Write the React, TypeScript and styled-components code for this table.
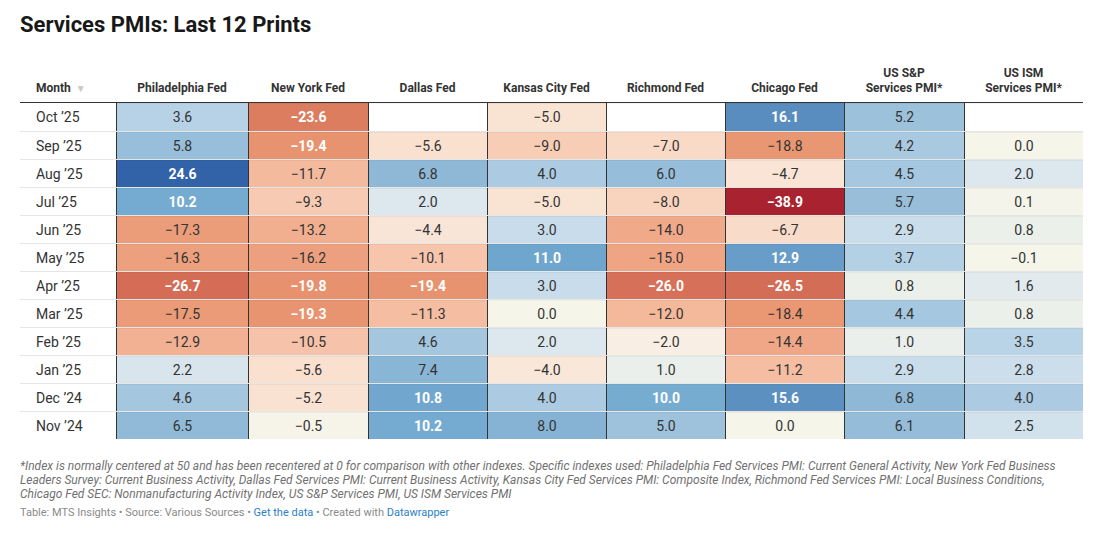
import React from "react";
import styled, { createGlobalStyle } from "styled-components";

const GlobalStyle = createGlobalStyle`
  html, body {
    margin: 0;
    padding: 0;
    background: #ffffff;
  }
  body {
    font-family: Roboto, "Liberation Sans", Arial, sans-serif;
    color: #333333;
  }
`;

type Row = { month: string; values: (number | null)[] };

const columns = [
  "Philadelphia Fed",
  "New York Fed",
  "Dallas Fed",
  "Kansas City Fed",
  "Richmond Fed",
  "Chicago Fed",
  "US S&P\nServices PMI*",
  "US ISM\nServices PMI*",
];

const widths = [96, 132, 120, 119, 119, 119, 119, 120, 119];

const rows: Row[] = [
  { month: "Oct ’25", values: [3.6, -23.6, null, -5.0, null, 16.1, 5.2, null] },
  { month: "Sep ’25", values: [5.8, -19.4, -5.6, -9.0, -7.0, -18.8, 4.2, 0.0] },
  { month: "Aug ’25", values: [24.6, -11.7, 6.8, 4.0, 6.0, -4.7, 4.5, 2.0] },
  { month: "Jul ’25", values: [10.2, -9.3, 2.0, -5.0, -8.0, -38.9, 5.7, 0.1] },
  { month: "Jun ’25", values: [-17.3, -13.2, -4.4, 3.0, -14.0, -6.7, 2.9, 0.8] },
  { month: "May ’25", values: [-16.3, -16.2, -10.1, 11.0, -15.0, 12.9, 3.7, -0.1] },
  { month: "Apr ’25", values: [-26.7, -19.8, -19.4, 3.0, -26.0, -26.5, 0.8, 1.6] },
  { month: "Mar ’25", values: [-17.5, -19.3, -11.3, 0.0, -12.0, -18.4, 4.4, 0.8] },
  { month: "Feb ’25", values: [-12.9, -10.5, 4.6, 2.0, -2.0, -14.4, 1.0, 3.5] },
  { month: "Jan ’25", values: [2.2, -5.6, 7.4, -4.0, 1.0, -11.2, 2.9, 2.8] },
  { month: "Dec ’24", values: [4.6, -5.2, 10.8, 4.0, 10.0, 15.6, 6.8, 4.0] },
  { month: "Nov ’24", values: [6.5, -0.5, 10.2, 8.0, 5.0, 0.0, 6.1, 2.5] },
];

// diverging red-blue scale, stops read off the chart
const stops: [number, number[]][] = [
  [-38.9, [168, 34, 47]],
  [-26, [214, 112, 88]],
  [-19.5, [232, 147, 111]],
  [-14, [240, 169, 137]],
  [-10, [247, 198, 173]],
  [-7, [249, 218, 199]],
  [-4, [249, 231, 217]],
  [-2, [248, 238, 227]],
  [0, [245, 245, 234]],
  [1, [234, 239, 235]],
  [2, [220, 231, 238]],
  [3, [200, 220, 235]],
  [4, [172, 203, 226]],
  [5, [158, 194, 220]],
  [7, [141, 183, 214]],
  [10, [119, 172, 209]],
  [11, [111, 166, 205]],
  [16, [90, 142, 191]],
  [24.6, [50, 98, 168]],
];

const colorFor = (v: number) => {
  if (v <= stops[0][0]) return `rgb(${stops[0][1].join(",")})`;
  for (let i = 1; i < stops.length; i++) {
    const [b, cb] = stops[i];
    const [a, ca] = stops[i - 1];
    if (v <= b) {
      const t = (v - a) / (b - a);
      const c = ca.map((x, k) => Math.round(x + (cb[k] - x) * t));
      return `rgb(${c.join(",")})`;
    }
  }
  return `rgb(${stops[stops.length - 1][1].join(",")})`;
};

const fmt = (v: number) => (v < 0 ? "\u2212" + Math.abs(v).toFixed(1) : v.toFixed(1));

const Page = styled.div`
  padding: 11px 21px 0 20px;
`;

const Title = styled.h1`
  margin: 0;
  font-size: 22px;
  line-height: 28px;
  font-weight: 700;
  color: #181818;
`;

const Table = styled.div`
  margin-top: 23px;
  width: 1063px;
`;

const HeadRow = styled.div`
  display: grid;
  grid-template-columns: ${widths.map((w) => w + "px").join(" ")};
  align-items: end;
  border-bottom: 1px solid #333333;
`;

const HeadCell = styled.div<{ $left?: boolean }>`
  padding: 4px 4px 6px ${({ $left }) => ($left ? "16px" : "4px")};
  text-align: ${({ $left }) => ($left ? "left" : "center")};
  font-size: 12px;
  line-height: 15px;
  font-weight: 700;
  color: #333333;
  white-space: pre-line;
`;

const SortArrow = styled.span`
  color: #c8c8c8;
  font-size: 10px;
  margin-left: 5px;
`;

const BodyRow = styled.div<{ $first?: boolean }>`
  display: grid;
  grid-template-columns: ${widths.map((w) => w + "px").join(" ")};
  height: 28px;
  border-top: ${({ $first }) => ($first ? "none" : "1px solid #e6e6e6")};
  box-sizing: border-box;
`;

const MonthCell = styled.div`
  padding-left: 16px;
  display: flex;
  align-items: center;
  font-size: 14px;
  color: #333333;
`;

const ValueCell = styled.div<{ $dark?: boolean }>`
  display: flex;
  align-items: center;
  justify-content: center;
  border-left: 1px solid #333333;
  box-sizing: border-box;
  font-size: 14px;
  font-weight: ${({ $dark }) => ($dark ? 700 : 400)};
  color: ${({ $dark }) => ($dark ? "#ffffff" : "#333333")};
  box-shadow: inset 0 1px 0 rgba(0, 0, 0, 0.04);
`;

const Notes = styled.p`
  margin: 20px 0 0;
  width: 1063px;
  font-size: 12px;
  line-height: 14px;
  font-style: italic;
  color: #717171;
`;

const Credits = styled.div`
  margin-top: 5px;
  font-size: 11px;
  line-height: 14px;
  color: #8a8a8a;
`;

const Link = styled.a`
  color: #2b80c8;
  text-decoration: none;
`;

export default function App() {
  return (
    <Page>
      <GlobalStyle />
      <Title>Services PMIs: Last 12 Prints</Title>
      <Table>
        <HeadRow>
          <HeadCell $left>
            Month<SortArrow>▼</SortArrow>
          </HeadCell>
          {columns.map((c) => (
            <HeadCell key={c}>{c}</HeadCell>
          ))}
        </HeadRow>
        {rows.map((r, i) => (
          <BodyRow key={r.month} $first={i === 0}>
            <MonthCell>{r.month}</MonthCell>
            {r.values.map((v, j) =>
              v === null ? (
                <ValueCell key={j} style={{ background: "#ffffff" }} />
              ) : (
                <ValueCell
                  key={j}
                  $dark={v >= 10 || v <= -19}
                  style={{ background: colorFor(v) }}
                >
                  {fmt(v)}
                </ValueCell>
              )
            )}
          </BodyRow>
        ))}
      </Table>
      <Notes>
        *Index is normally centered at 50 and has been recentered at 0 for comparison with other indexes. Specific
        indexes used: Philadelphia Fed Services PMI: Current General Activity, New York Fed Business Leaders Survey:
        Current Business Activity, Dallas Fed Services PMI: Current Business Activity, Kansas City Fed Services PMI:
        Composite Index, Richmond Fed Services PMI: Local Business Conditions, Chicago Fed SEC: Nonmanufacturing
        Activity Index, US S&amp;P Services PMI, US ISM Services PMI
      </Notes>
      <Credits>
        Table: MTS Insights • Source: Various Sources • <Link href="#">Get the data</Link> • Created with{" "}
        <Link href="#">Datawrapper</Link>
      </Credits>
    </Page>
  );
}
